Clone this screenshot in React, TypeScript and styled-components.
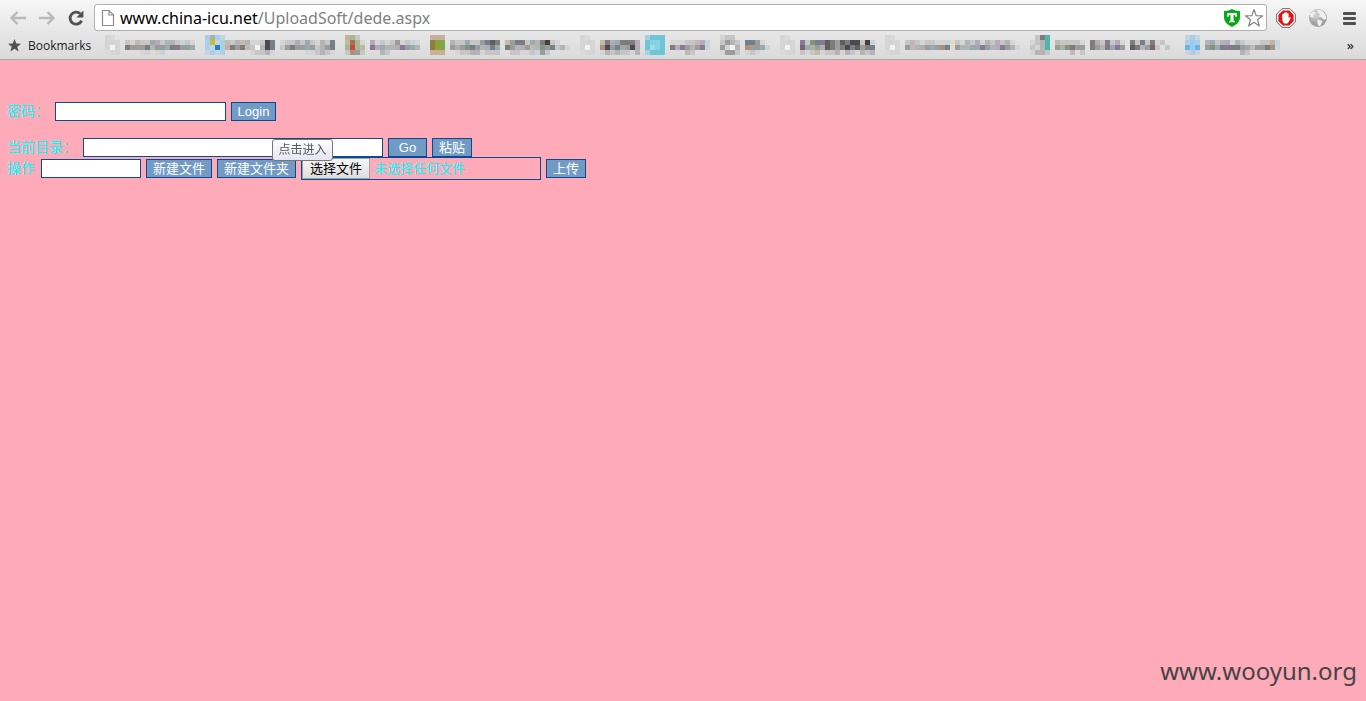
import React from 'react';
import styled, { createGlobalStyle } from 'styled-components';

const GlobalStyle = createGlobalStyle`
  * { box-sizing: border-box; }
  body {
    margin: 0;
    background: #ffaab9;
    font-family: "Liberation Sans", "Noto Sans CJK SC", sans-serif;
  }
`;

const Page = styled.div`
  display: flex;
  flex-direction: column;
  min-height: 100vh;
`;

const BrowserBar = styled.header`
  border-bottom: 1px solid #a9a9a9;
  background: linear-gradient(#f6f6f6, #dadada);
  font-family: "Open Sans", "Noto Sans", sans-serif;
`;

const Toolbar = styled.div`
  display: flex;
  align-items: center;
  height: 35px;
  padding-left: 8px;
`;

const IconButton = styled.button<{ $width: number }>`
  display: flex;
  align-items: center;
  justify-content: center;
  flex: none;
  width: ${(p) => p.$width}px;
  height: 24px;
  padding: 0;
  border: 0;
  background: none;
`;

const Omnibox = styled.div`
  display: flex;
  align-items: center;
  flex: 1;
  height: 27px;
  margin: 0 3px 0 8px;
  padding: 0 1px 0 6px;
  border: 1px solid #b0b0b0;
  border-radius: 3px;
  background: #fff;
`;

const Address = styled.div`
  flex: 1;
  margin-left: 5px;
  font-family: "Noto Sans", sans-serif;
  font-size: 16px;
  line-height: 24px;
  color: #808080;
  white-space: nowrap;
`;

const Host = styled.span`
  color: #000;
`;

const BookmarkBar = styled.nav`
  display: flex;
  align-items: flex-start;
  height: 24px;
  padding-right: 12px;
  padding-left: 8px;
`;

const BookmarkTitle = styled.a`
  display: flex;
  align-items: center;
  gap: 7px;
  width: 97px;
  height: 21px;
  font-size: 12px;
  color: #222;
  text-decoration: none;
`;

const BookmarkLink = styled.a`
  display: block;
  flex: none;
`;

const Mosaic = styled.svg`
  display: block;
`;

const Overflow = styled.button`
  margin-left: auto;
  padding: 0;
  border: 0;
  background: none;
  font-family: "Open Sans", sans-serif;
  font-size: 13px;
  line-height: 20px;
  font-weight: 600;
  color: #333;
`;

const Content = styled.main`
  position: relative;
  flex: 1;
  padding: 42px 7px 0;
  color: #00ffff;
  font-size: 14px;
`;

const Row = styled.div<{ $height: number; $after: number }>`
  display: flex;
  align-items: center;
  gap: 5px;
  height: ${(p) => p.$height}px;
  margin-bottom: ${(p) => p.$after}px;
`;

const Label = styled.label`
  margin-right: 1px;
  line-height: 19px;
  white-space: nowrap;
`;

const TextBox = styled.input<{ $width: number }>`
  width: ${(p) => p.$width}px;
  height: 19px;
  padding: 0 2px;
  border: 1px solid #084b8e;
  background: #fff;
  font-size: 13px;
  outline: none;
`;

const Action = styled.button<{ $width: number }>`
  width: ${(p) => p.$width}px;
  height: 19px;
  padding: 0;
  border: 1px solid #084b8e;
  background: #719bc5;
  color: #fff;
  font-family: "Liberation Sans", "Noto Sans CJK SC", sans-serif;
  font-size: 13px;
  line-height: 17px;
  white-space: nowrap;
`;

const FilePicker = styled.label`
  position: relative;
  display: flex;
  align-items: center;
  gap: 4px;
  width: 240px;
  height: 23px;
  border: 1px solid #084b8e;
  font-size: 13px;
  line-height: 19px;
`;

const FileInput = styled.input`
  position: absolute;
  inset: 0;
  width: 100%;
  opacity: 0;
`;

const FileButton = styled.span`
  width: 68px;
  height: 21px;
  border: 1px solid #a0a0a0;
  background: linear-gradient(#f6f6f6, #dedede);
  color: #000;
  text-align: center;
`;

const Tooltip = styled.div`
  position: absolute;
  top: 79px;
  left: 272px;
  width: 61px;
  height: 22px;
  border: 1px solid #767676;
  border-radius: 3px;
  background: linear-gradient(#fff, #e4e5f0);
  color: #575757;
  font-size: 12px;
  line-height: 20px;
  text-align: center;
`;

const Watermark = styled.footer`
  padding: 0 9px 12px;
  color: #444;
  font-family: "Noto Sans", sans-serif;
  font-size: 24px;
  line-height: 36px;
  text-align: right;
`;

const palette: Record<string, string> = {
  a: '#d5d5d5', b: '#c6c6c6', c: '#b3b5b5', d: '#9b9d9c', e: '#7f7d7c',
  f: '#5f5f5c', g: '#4b4a52', w: '#f3f3f3', p: '#b5aab8', v: '#8b7896',
  t: '#c3baae', y: '#e4dac5', o: '#b18e77', n: '#9aaab1', N: '#71818e',
  s: '#c5d5dd', B: '#a8d0e8', Y: '#c8bf42', U: '#2583c5', G: '#a9b49c',
  H: '#87927a', r: '#c74a42', q: '#ad6e4b', m: '#c9ae99', k: '#8b8041',
  l: '#91a034', j: '#78aa4d', h: '#b9bd9a', C: '#6dc5da', D: '#86d2e3',
  E: '#a0dce8', T: '#4db6ae', z: '#4c3b3b', L: '#93cdf5', M: '#70b2e0',
  S: '#b0cbe2', R: '#c8b5b9', O: '#7d626d', x: '#dadada',
};

const cell = 5;

// span is the space, in cells, from the start of one saved page to the next.
const bookmarks: { name: string; span: number; rows: string[] }[] = [
  { name: 'Bookmark 1', span: 20, rows: [
    'ax................',
    'aaa.batbbnpbccbsba',
    'awa.edddecddnevddn',
    'xaa....asyas......'] },
  { name: 'Bookmark 2', span: 28, rows: [
    'BGBs......................',
    'BYsBtbctcaabgN.abbpbnbacbN',
    'BsUBmedetbwcgN.bdeddndbcde',
    'sBsB.....abbca......aabcba'] },
  { name: 'Bookmark 3', span: 17, rows: [
    'mGb............',
    'hqGa.pababdabsa',
    'GrGh.vpnccpvdnc',
    'bodb...cb......'] },
  { name: 'Bookmark 4', span: 30, rows: [
    'mmm.........................',
    'klj.cbbnbbdNfe.tdNebncezba..',
    'klj.dpdHNdcpNn.edcpdtcHdNbca',
    'mmm..abbccabbb..bbaabsdb....'] },
  { name: 'Bookmark 5', span: 13, rows: [
    'ax..........',
    'aaa.tepneeep',
    'awa.ogdNndgp',
    'xaa.acbcbbac'] },
  { name: 'Bookmark 6', span: 15, rows: [
    'BCCC.........',
    'CDDC.aaabbRps',
    'CEDC.epvdcdvs',
    'BCCC....tb...'] },
  { name: 'Bookmark 7', span: 12, rows: [
    'abb.......',
    'bdcb.NNda.',
    'dawc.oddns',
    'addb.aba..'] },
  { name: 'Bookmark 8', span: 21, rows: [
    'ax.................',
    'aaa.vbHNvfedfeggbzs',
    'awa.OnGdpfedegNfdeN',
    'xaa.babtabbcacbacbc'] },
  { name: 'Bookmark 9', span: 29, rows: [
    'ax.........................',
    'aaa.bRbabbaasybacbpacbpbca.',
    'awa.dRcpdndoNydccnnvdcpvdca',
    'xaa........................'] },
  { name: 'Bookmark 10', span: 31, rows: [
    '.beT........................',
    'abcT.tbbbba.epbvbpa.ebNbeab.',
    'bacT.dGHedd.edcenvd.fecdOb.b',
    'accb....R.b.................'] },
  { name: 'Bookmark 11', span: 19, rows: [
    'sSs................',
    'SLS.cnbcpacbaaabbms',
    'MLM.dHnNveNdnRddeos',
    'sSs........cb......'] },
];

function PixelBookmark({ name, rows, span }: { name: string; rows: string[]; span: number }) {
  return (
    <BookmarkLink href="#" aria-label={name}>
      <Mosaic width={span * cell} height={20} shapeRendering="crispEdges">
        {rows.flatMap((row, y) =>
          [...row].map((key, x) =>
            palette[key] ? (
              <rect key={`${x}-${y}`} x={x * cell} y={y * cell} width={cell} height={cell} fill={palette[key]} />
            ) : null,
          ),
        )}
      </Mosaic>
    </BookmarkLink>
  );
}

export default function App() {
  return (
    <Page>
      <GlobalStyle />
      <BrowserBar>
        <Toolbar>
          <IconButton $width={20} aria-label="Back">
            <svg width="18" height="16" viewBox="0 0 18 16" fill="none" stroke="#b9b9b9" strokeWidth="2.4">
              <path d="M8.5 2 L2.5 8 L8.5 14 M2.5 8 H17" />
            </svg>
          </IconButton>
          <IconButton $width={38} aria-label="Forward">
            <svg width="18" height="16" viewBox="0 0 18 16" fill="none" stroke="#b9b9b9" strokeWidth="2.4">
              <path d="M9.5 2 L15.5 8 L9.5 14 M15.5 8 H1" />
            </svg>
          </IconButton>
          <IconButton $width={20} aria-label="Reload">
            <svg width="18" height="18" viewBox="0 0 18 18">
              <path d="M14.6 11.6 A6 6 0 1 1 13.2 4.8" fill="none" stroke="#505050" strokeWidth="2.8" />
              <path d="M16.4 1.5 V8.5 H9.4 Z" fill="#505050" />
            </svg>
          </IconButton>
          <Omnibox>
            <svg width="14" height="18" viewBox="0 0 14 18" fill="#fff" stroke="#8c8c8c" strokeWidth="1.2">
              <path d="M1.5 1.5 H8 L12.5 6 V16.5 H1.5 Z M8 1.5 V6 H12.5" />
            </svg>
            <Address><Host>www.china-icu.net</Host>/UploadSoft/dede.aspx</Address>
            <IconButton $width={22} aria-label="Site safety">
              <svg width="18" height="20" viewBox="0 0 18 20">
                <path d="M1 3 Q5 3.5 9 1 Q13 3.5 17 3 V10 Q17 15 9 19 Q1 15 1 10 Z" fill="#09a817" />
                <path d="M4.2 5 H13.8 V8.8 H12.4 L11.7 7 H10.5 V12.8 L11.8 13.2 V14.2 H6.2 V13.2 L7.5 12.8 V7 H6.3 L5.6 8.8 H4.2 Z" fill="#fff" />
              </svg>
            </IconButton>
            <IconButton $width={22} aria-label="Bookmark this page">
              <svg width="20" height="20" viewBox="0 0 20 20" fill="#fff" stroke="#828282" strokeWidth="1.2">
                <path d="M10 1.5 L12.2 7.6 L18.6 7.8 L13.5 11.7 L15.3 18 L10 14.3 L4.7 18 L6.5 11.7 L1.4 7.8 L7.8 7.6 Z" strokeLinejoin="round" />
              </svg>
            </IconButton>
          </Omnibox>
          <IconButton $width={32} aria-label="Ad blocker">
            <svg width="20" height="20" viewBox="0 0 20 20">
              <path d="M6 .7 H14 L19.3 6 V14 L14 19.3 H6 L.7 14 V6 Z" fill="#fff" stroke="#666" />
              <path d="M6.7 2.4 H13.3 L17.6 6.7 V13.3 L13.3 17.6 H6.7 L2.4 13.3 V6.7 Z" fill="#dc1515" />
              <path d="M6.3 10.5 V6.2 Q7 5.1 7.8 6.2 V9 V5 Q8.6 3.9 9.4 5 V8.5 V4.5 Q10.2 3.5 11 4.5 V8.8 V5.5 Q11.9 4.6 12.6 5.6 V10.4 L13.8 9.1 Q15 9 14.5 10.4 L12.2 14.8 Q10.8 16 8.8 15.5 Q6.3 14.8 6.3 10.5 Z" fill="#fff" />
            </svg>
          </IconButton>
          <IconButton $width={32} aria-label="Globe extension">
            <svg width="20" height="20" viewBox="0 0 20 20">
              <defs>
                <radialGradient id="globe" cx="35%" cy="30%">
                  <stop offset="0" stopColor="#ddd" />
                  <stop offset="1" stopColor="#a0a0a0" />
                </radialGradient>
              </defs>
              <circle cx="10" cy="10" r="9" fill="url(#globe)" />
              <path d="M9 1.5 L14 2.5 L17.5 6.5 L18.5 10.5 L16 12 L13.5 9.5 L10.5 8.5 L12 6 L9.5 4.5 Z M10 11.5 L14.5 13 L12.5 17.5 L10.5 18 L9 14 Z M2 6 L5 3.5 L7.5 4 L5 7.5 L6 10 L2.5 9 Z" fill="#f0f0f0" />
            </svg>
          </IconButton>
          <IconButton $width={32} aria-label="Menu">
            <svg width="14" height="14" viewBox="0 0 14 14" fill="#515151">
              <rect y="1" width="13" height="3" rx="1" />
              <rect y="6" width="13" height="3" rx="1" />
              <rect y="11" width="13" height="3" rx="1" />
            </svg>
          </IconButton>
        </Toolbar>
        <BookmarkBar>
          <BookmarkTitle href="#">
            <svg width="13" height="13" viewBox="0 0 13 13" fill="#515151">
              <path d="M6.5 0 L8.3 4.5 L13 4.7 L9.3 7.7 L10.6 12.5 L6.5 9.8 L2.4 12.5 L3.7 7.7 L0 4.7 L4.7 4.5 Z" />
            </svg>
            Bookmarks
          </BookmarkTitle>
          {bookmarks.map((b) => (
            <PixelBookmark key={b.name} {...b} />
          ))}
          <Overflow aria-label="More bookmarks">»</Overflow>
        </BookmarkBar>
      </BrowserBar>
      <Content>
        <Row $height={19} $after={17}>
          <Label htmlFor="password">密码：</Label>
          <TextBox id="password" type="password" $width={171} />
          <Action $width={45}>Login</Action>
        </Row>
        <Row $height={19} $after={0}>
          <Label htmlFor="directory">当前目录：</Label>
          <TextBox id="directory" type="text" $width={300} />
          <Action $width={39}>Go</Action>
          <Action $width={40}>粘贴</Action>
        </Row>
        <Row $height={23} $after={0}>
          <Label htmlFor="operation">操作</Label>
          <TextBox id="operation" type="text" $width={100} />
          <Action $width={66}>新建文件</Action>
          <Action $width={79}>新建文件夹</Action>
          <FilePicker>
            <FileInput type="file" />
            <FileButton>选择文件</FileButton>
            未选择任何文件
          </FilePicker>
          <Action $width={40}>上传</Action>
        </Row>
        <Tooltip role="tooltip">点击进入</Tooltip>
      </Content>
      <Watermark>www.wooyun.org</Watermark>
    </Page>
  );
}
